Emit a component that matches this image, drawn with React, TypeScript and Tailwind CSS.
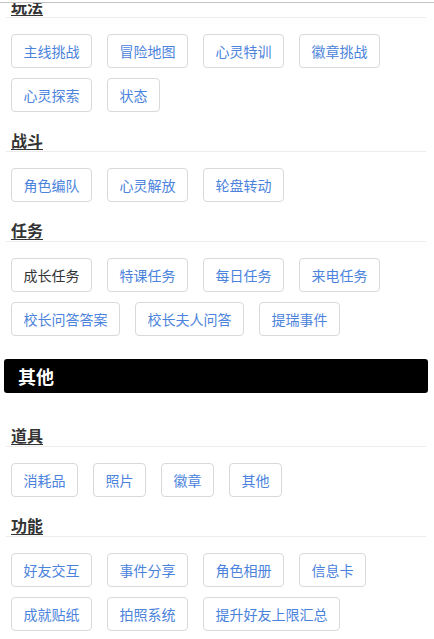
import React from "react";

type Item = { label: string; visited?: boolean };

type Section = { title: string; items: Item[] };

const groupA: Section[] = [
  {
    title: "玩法",
    items: [
      { label: "主线挑战" },
      { label: "冒险地图" },
      { label: "心灵特训" },
      { label: "徽章挑战" },
      { label: "心灵探索" },
      { label: "状态" },
    ],
  },
  {
    title: "战斗",
    items: [{ label: "角色编队" }, { label: "心灵解放" }, { label: "轮盘转动" }],
  },
  {
    title: "任务",
    items: [
      { label: "成长任务", visited: true },
      { label: "特课任务" },
      { label: "每日任务" },
      { label: "来电任务" },
      { label: "校长问答答案" },
      { label: "校长夫人问答" },
      { label: "提瑞事件" },
    ],
  },
];

const groupB: Section[] = [
  {
    title: "道具",
    items: [{ label: "消耗品" }, { label: "照片" }, { label: "徽章" }, { label: "其他" }],
  },
  {
    title: "功能",
    items: [
      { label: "好友交互" },
      { label: "事件分享" },
      { label: "角色相册" },
      { label: "信息卡" },
      { label: "成就贴纸" },
      { label: "拍照系统" },
      { label: "提升好友上限汇总" },
    ],
  },
];

function SectionBlock({ section, first }: { section: Section; first?: boolean }) {
  return (
    <div>
      <h3
        className={`${first ? "" : "mt-[17px]"} ml-[6px] mr-[8px] pl-[5px] border-b border-[#ececec] text-[16px] leading-[22px] font-bold text-[#333]`}
      >
        <span className="underline underline-offset-[2px] decoration-[1px]">{section.title}</span>
      </h3>
      <div className="mt-[16px] pl-[11px] pr-[8px] flex flex-wrap gap-x-[15px] gap-y-[10px]">
        {section.items.map((it) => (
          <a
            key={it.label}
            className={`h-[34px] px-[11.5px] flex items-center border border-[#d9d9d9] rounded-[4px] bg-white text-[14px] leading-none whitespace-nowrap ${
              it.visited ? "text-[#333]" : "text-[#4b83dc]"
            }`}
          >
            {it.label}
          </a>
        ))}
      </div>
    </div>
  );
}

export default function App() {
  return (
    <div
      className="relative w-[434px] h-[639px] overflow-hidden bg-white"
      style={{ fontFamily: '"Noto Sans CJK SC", "Liberation Sans", sans-serif' }}
    >
      <div className="-mt-[5px] flex flex-col">
        <div>
          {groupA.map((s, i) => (
            <SectionBlock key={s.title} section={s} first={i === 0} />
          ))}
        </div>
        <div className="mt-[23px] ml-[4px] mr-[6px] h-[34px] rounded-[3px] bg-black flex items-center pl-[14px]">
          <span className="text-white text-[18px] font-bold leading-none">其他</span>
        </div>
        <div className="mt-[31px]">
          {groupB.map((s, i) => (
            <SectionBlock key={s.title} section={s} first={i === 0} />
          ))}
        </div>
      </div>
      {/* fixed page header edge */}
      <div className="absolute top-0 left-0 right-0 h-[3px] bg-white border-b border-[#c4c4c4]" />
    </div>
  );
}
